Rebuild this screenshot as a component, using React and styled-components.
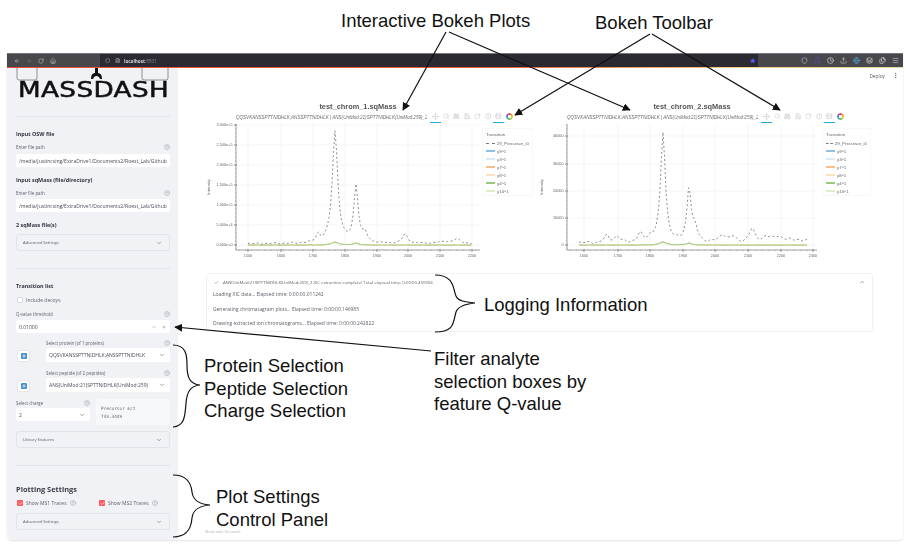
import React from 'react'
import styled, {createGlobalStyle} from 'styled-components'
import {
    ArrowLeft, ArrowRight, RotateCw, House, Shield, FileText, Star, Ghost, Clock, Upload, Globe,
    Layers, Files, Menu, ChevronDown, ChevronUp, CircleHelp, Check, Minus, Plus, EllipsisVertical,
    Move, Search, Binoculars, Save, Rows3, Hash,
} from 'lucide-react'

const GlobalStyle = createGlobalStyle`
html, body {
    margin: 0;
    padding: 0;
    width: 906px;
    height: 546px;
    overflow: hidden;
    background: white;
    font-family: "Open Sans", "Liberation Sans", sans-serif;
}
* {
    box-sizing: border-box;
}
`

const Page = styled.div`
position: relative;
width: 906px;
height: 546px;
padding: 53px 3px 0 7px;
`

const Window = styled.div`
display: flex;
flex-direction: column;
height: 487px;
border-radius: 0 0 5px 5px;
box-shadow: 0 1px 2px rgba(0,0,0,0.12);
overflow: hidden;
filter: blur(0.55px);
`

const BrowserBar = styled.div`
display: flex;
align-items: center;
height: 14px;
flex-shrink: 0;
background-color: #47474c;
border-top: 1px solid #77777b;
color: #c8c8cc;
`

const NavButtons = styled.div`
display: flex;
align-items: center;
gap: 6px;
width: 93px;
padding-left: 7px;
`

const UrlBar = styled.div`
display: flex;
align-items: center;
gap: 4px;
width: 658px;
height: 13px;
padding: 0 3px 0 5px;
background-color: #2b2a33;
`

const UrlText = styled.span`
font-size: 4.6px;
font-weight: 700;
color: #d4d4d8;
span {
    font-weight: 400;
    color: #8a8a90;
}
`

const UrlStar = styled(Star)`
margin-left: auto;
`

const AddonIcons = styled.div`
display: flex;
align-items: center;
gap: 6px;
margin-left: 43px;
`

const AccentLine = styled.div`
height: 1px;
flex-shrink: 0;
background: linear-gradient(90deg, #e8503a 0%, #e8603a 55%, #f2c879 80%, #e8d9a8 100%);
`

const AppBody = styled.div`
display: flex;
flex: 1;
min-height: 0;
background-color: white;
`

const Sidebar = styled.aside`
width: 171px;
flex-shrink: 0;
padding: 0 8px 0 9px;
background-color: #f0f2f6;
color: #31333f;
overflow: hidden;
`

const LogoBlock = styled.div`
height: 48px;
`

const LogoArt = styled.svg`
display: block;
width: 154px;
height: 13px;
`

const LogoText = styled.div`
margin: -1px 0 0 2px;
font-family: "DejaVu Sans", sans-serif;
font-size: 20.5px;
line-height: 20px;
color: #111;
letter-spacing: 0.3px;
white-space: nowrap;
transform: scaleX(1.28);
transform-origin: left center;
-webkit-text-stroke: 0.5px #111;
`

const Divider = styled.div`
height: 1px;
margin-top: ${p => p.$mt ?? 17}px;
background-color: #e1e3e8;
`

const Heading = styled.div`
height: 8px;
margin-top: ${p => p.$mt}px;
font-size: 5.4px;
line-height: 8px;
font-weight: 700;
white-space: nowrap;
`

const BigHeading = styled.div`
height: 10px;
margin-top: 18px;
font-size: 7.4px;
line-height: 10px;
font-weight: 700;
color: #3a3c47;
`

const LabelRow = styled.div`
display: flex;
justify-content: space-between;
align-items: center;
height: 7px;
margin-top: ${p => p.$mt || 0}px;
font-size: 4.4px;
color: #5c5e68;
white-space: nowrap;
`

const HelpIcon = styled(CircleHelp)`
width: 6px;
height: 6px;
color: #9a9ca5;
`

const TextField = styled.div`
display: flex;
align-items: center;
height: 13px;
margin-top: ${p => p.$mt}px;
padding: 0 3px;
border-radius: 2.5px;
background-color: white;
font-size: 5.05px;
color: #4a4c57;
white-space: nowrap;
overflow: hidden;
`

const Expander = styled.div`
display: flex;
align-items: center;
justify-content: space-between;
height: 17px;
margin-top: ${p => p.$mt}px;
padding: 0 7px 0 6px;
border: 1px solid #e2e4e9;
border-radius: 3px;
font-size: 4.2px;
color: #5c5e68;
`

const SmallChevron = styled(ChevronDown)`
width: 6px;
height: 6px;
color: #555;
`

const CheckRow = styled.div`
display: flex;
align-items: center;
gap: 3px;
height: 8px;
margin-top: ${p => p.$mt}px;
font-size: 5px;
color: #5c5e68;
white-space: nowrap;
`

const CheckBox = styled.span`
display: flex;
align-items: center;
justify-content: center;
width: 6px;
height: 6px;
margin-left: 1px;
border-radius: 1px;
border: ${p => p.$on ? 'none' : '1px solid #d5d7de'};
background-color: ${p => p.$on ? '#ff5a5f' : 'white'};
color: white;
`

const CheckPair = styled.div`
display: grid;
grid-template-columns: 82px 1fr;
margin-top: 5px;
`

const NumberField = styled(TextField)`
justify-content: space-between;
padding-right: 4px;
`

const Stepper = styled.div`
display: flex;
gap: 6px;
color: #555;
`

const PickRow = styled.div`
display: flex;
align-items: flex-end;
gap: 16px;
margin-top: ${p => p.$mt}px;
padding-left: 1px;
`

const PickColumn = styled.div`
flex: 1;
min-width: 0;
`

const SquareButton = styled.div`
display: flex;
align-items: center;
justify-content: center;
width: 13px;
height: 12px;
border: 1px solid #e4e6eb;
border-radius: 2px;
background-color: white;
`

const BlueTile = styled.span`
display: flex;
align-items: center;
justify-content: center;
width: 6px;
height: 6px;
border-radius: 1px;
background-color: #4a8fd0;
color: white;
`

const SelectBox = styled.div`
display: flex;
align-items: center;
justify-content: space-between;
height: ${p => p.$h || 14}px;
margin-top: 2px;
padding: 0 5px 0 3px;
border-radius: 2.5px;
background-color: white;
font-size: 5px;
color: #4a4c57;
white-space: nowrap;
`

const ChargeRow = styled.div`
display: grid;
grid-template-columns: 74px 74px;
gap: 6px;
margin-top: 7px;
`

const PrecursorBox = styled.div`
height: 26px;
padding: 6px 5px;
border-radius: 2.5px;
background-color: #f7f8fa;
font-family: "DejaVu Sans Mono", "Liberation Mono", monospace;
font-size: 4.4px;
line-height: 7.5px;
color: #6a6c76;
`

const Content = styled.main`
flex: 1;
min-width: 0;
padding: 4px 4px 0 26px;
color: #444;
`

const TopRow = styled.div`
display: flex;
justify-content: flex-end;
align-items: center;
gap: 7px;
height: 7px;
font-size: 4.8px;
color: #5c5e68;
`

const PlotRow = styled.div`
display: flex;
margin-top: 22px;
`

const ChartBlock = styled.section`
width: ${p => p.$width}px;
flex-shrink: 0;
`

const ChartTitle = styled.h2`
margin: 0 0 0 ${p => p.$gutter}px;
width: ${p => p.$plot}px;
height: 10px;
font-family: "Liberation Sans", sans-serif;
font-size: 7.4px;
line-height: 11px;
font-weight: 700;
text-align: center;
color: #555;
`

const ChartHead = styled.div`
display: flex;
align-items: center;
height: 12px;
margin-left: ${p => p.$gutter}px;
`

const ChartSub = styled.div`
width: ${p => p.$width}px;
font-family: "Liberation Sans", sans-serif;
font-size: 4.55px;
font-style: italic;
color: #6c6c6c;
white-space: nowrap;
overflow: hidden;
`

const ToolStrip = styled.div`
display: flex;
margin-left: 3px;
`

const ToolButton = styled.span`
display: flex;
align-items: center;
justify-content: center;
width: 10.5px;
height: 12px;
color: #b5b5b8;
border-bottom: 1px solid ${p => p.$active ? '#26aae1' : 'transparent'};
`

const BokehWheel = styled.span`
display: block;
width: 7px;
height: 7px;
margin: 2px 0 0 2px;
border-radius: 50%;
background: conic-gradient(#e84a5f, #f6a21e, #f5d020, #5fbf5f, #2fa8e0, #7a5cc8, #e84a5f);
mask: radial-gradient(circle, transparent 1.6px, black 1.9px);
`

const ChartBody = styled.div`
display: flex;
align-items: flex-start;
`

const ChartSvg = styled.svg`
display: block;
flex-shrink: 0;
font-family: "Liberation Sans", sans-serif;
`

const Legend = styled.div`
width: ${p => p.$width}px;
height: 68px;
margin: 5px 0 0 ${p => p.$gap}px;
padding: 2px 3px;
border: 1px solid #f8f8f8;
font-family: "Liberation Sans", sans-serif;
font-size: 4.4px;
color: #666;
`

const LegendTitle = styled.div`
height: 8px;
line-height: 8px;
`

const LegendItem = styled.div`
display: flex;
align-items: center;
gap: 2px;
height: 8px;
white-space: nowrap;
`

const Swatch = styled.span`
display: block;
width: 9px;
height: 0;
border-top: ${p => p.$dashed ? '1px dashed #777' : `2px solid ${p.$color}`};
`

const LogBox = styled.section`
width: 667px;
height: 59px;
margin: 12px 0 0 2px;
padding: 4px 6px;
border: 1px solid #f1f1f3;
border-radius: 3px;
font-size: 4.95px;
color: #5b5d67;
`

const LogHead = styled.div`
display: flex;
align-items: center;
gap: 4px;
height: 8px;
padding-left: 1px;
font-size: 4.3px;
white-space: nowrap;
`

const LogChevron = styled(ChevronUp)`
width: 6px;
height: 6px;
margin-left: auto;
margin-right: 1px;
color: #555;
`

const LogLine = styled.div`
height: 7px;
margin-top: ${p => p.$mt}px;
line-height: 7px;
white-space: nowrap;
`

const Footer = styled.div`
position: absolute;
left: 205px;
top: 529px;
font-size: 3.8px;
color: #b5b7bd;
filter: blur(0.5px);
`

const Annotations = styled.svg`
position: absolute;
left: 0;
top: 0;
width: 906px;
height: 546px;
pointer-events: none;
`

const Note = styled.div`
position: absolute;
left: ${p => p.$x}px;
top: ${p => p.$y}px;
font-family: "Liberation Sans", Arial, sans-serif;
font-size: 18.5px;
line-height: 22.5px;
color: #111;
white-space: nowrap;
`

const wave = (peaks, from, to, base, noise) => {
    const pts = []
    for (let x = from; x <= to; x += 1.5) {
        let y = base
        peaks.forEach(([c, h, w]) => {
            y -= h / (1 + ((x - c) / w) * ((x - c) / w))
        })
        y -= noise * (0.5 + 0.5 * Math.sin(x * 0.53) * Math.sin(x * 0.19))
        pts.push(`${x},${y.toFixed(1)}`)
    }
    return pts.join(' ')
}

const charts = [
    {
        name: 'test_chrom_1.sqMass',
        width: 333,
        gutter: 32,
        plot: 244,
        subWidth: 191,
        legendGap: 2,
        legendWidth: 51,
        yTicks: [['3.000e+5', 124], ['2.500e+5', 144], ['2.000e+5', 164], ['1.500e+5', 184], ['1.000e+5', 204], ['5.000e+4', 224], ['0.000e+0', 244]],
        xTicks: [[1500, 12], [1600, 45], [1700, 77], [1800, 109], [1900, 141], [2000, 172], [2100, 204], [2200, 236]],
        peaks: [[99, 112, 3.2], [120, 57, 2.6], [82, 8, 2], [129, 9, 2.5], [169, 9, 3.2], [221, 4, 4], [209, 2, 8]],
        from: 12,
        to: 236,
        noise: 1.5,
        bump: [[99, 3, 4], [120, 2, 3]],
    },
    {
        name: 'test_chrom_2.sqMass',
        width: 335,
        gutter: 30,
        plot: 250,
        subWidth: 191,
        legendGap: 5,
        legendWidth: 49,
        yTicks: [['40000', 135], ['30000', 163], ['20000', 190], ['10000', 217], ['0', 244]],
        xTicks: [[1600, 17], [1700, 51], [1800, 83], [1900, 116], [2000, 148], [2100, 181], [2200, 214], [2300, 246]],
        peaks: [[96, 110, 2.8], [122, 55, 2.4], [40, 7, 3], [50, 6, 3], [73, 8, 3], [84, 5, 3], [128, 13, 3], [156, 8, 4], [166, 5, 3], [185, 13, 3.5], [199, 5, 4], [211, 6, 6], [230, 3, 10]],
        from: 12,
        to: 240,
        noise: 3,
        bump: [[96, 3, 4], [122, 2, 3]],
    },
]

const legendRows = [
    ['y9^1', '#8fbfe4'],
    ['y3^1', '#dbe8f5'],
    ['y7^1', '#f9bd8a'],
    ['y8^1', '#fde0c2'],
    ['y4^1', '#98cb7c'],
    ['y10^1', '#dbeeca'],
]

const Chart = ({chart}) => {
    const {gutter, plot} = chart
    const minor = []
    for (let y = 124; y <= 249; y += 4) minor.push(y)
    const minorX = []
    for (let x = 3; x <= plot; x += 6.4) minorX.push(x)
    return (
        <ChartBlock $width={chart.width}>
            <ChartTitle $gutter={gutter} $plot={plot}>{chart.name}</ChartTitle>
            <ChartHead $gutter={gutter}>
                <ChartSub $width={chart.subWidth}>QQSVKANSSPTTNIDHLK;ANSSPTTNIDHLK | ANS(UniMod:21)SPTTNIDHLK(UniMod:259)_2</ChartSub>
                <ToolStrip>
                    <ToolButton $active><Move size={7} strokeWidth={1.4} /></ToolButton>
                    <ToolButton><Search size={6.5} strokeWidth={1.4} /></ToolButton>
                    <ToolButton><Binoculars size={6.5} strokeWidth={1.4} /></ToolButton>
                    <ToolButton><Save size={6.5} strokeWidth={1.4} /></ToolButton>
                    <ToolButton><RotateCw size={6.5} strokeWidth={1.4} /></ToolButton>
                    <ToolButton><CircleHelp size={6.5} strokeWidth={1.4} /></ToolButton>
                    <ToolButton $active><Rows3 size={6.5} strokeWidth={1.4} /></ToolButton>
                    <BokehWheel />
                </ToolStrip>
            </ChartHead>
            <ChartBody>
                <ChartSvg width={gutter + plot} height={138} viewBox={`${-gutter} 122 ${gutter + plot} 138`}>
                    {chart.yTicks.map(([label, y]) => (
                        <g key={label}>
                            <line x1="0" x2={plot} y1={y} y2={y} stroke="#f0f0f0" strokeWidth="0.7" />
                            <line x1="-2" x2="1" y1={y} y2={y} stroke="#666" strokeWidth="0.7" />
                            <text x="-3.5" y={y + 1.4} fontSize="3.8" fill="#666" textAnchor="end">{label}</text>
                        </g>
                    ))}
                    {chart.xTicks.map(([label, x]) => (
                        <g key={label}>
                            <line x1={x} x2={x} y1="124" y2="249" stroke="#f0f0f0" strokeWidth="0.7" />
                            <line x1={x} x2={x} y1="248" y2="251" stroke="#666" strokeWidth="0.7" />
                            <text x={x} y="256" fontSize="3.8" fill="#666" textAnchor="middle">{label}</text>
                        </g>
                    ))}
                    {minor.map(y => <line key={y} x1="-1" x2="0" y1={y} y2={y} stroke="#777" strokeWidth="0.5" />)}
                    {minorX.map(x => <line key={x} x1={x} x2={x} y1="249" y2="250" stroke="#777" strokeWidth="0.5" />)}
                    <line x1="0" x2="0" y1="123" y2="249" stroke="#777" strokeWidth="0.7" />
                    <line x1="0" x2={plot} y1="249" y2="249" stroke="#777" strokeWidth="0.7" />
                    <text fontSize="4.2" fill="#666" textAnchor="middle" transform={`translate(${-gutter + 6} 186) rotate(-90)`}>Intensity</text>
                    <polyline points={wave(chart.bump, chart.from, chart.to, 244, 0)} fill="none" stroke="#fbc79a" strokeWidth="1" />
                    <polyline points={wave(chart.bump, chart.from, chart.to, 244.2, 0.2)} fill="none" stroke="#a9d28f" strokeWidth="1.2" />
                    <polyline points={wave(chart.peaks, chart.from, chart.to, 243.5, chart.noise)} fill="none" stroke="#8c8c8c" strokeWidth="1" strokeDasharray="2 2.4" />
                </ChartSvg>
                <Legend $gap={chart.legendGap} $width={chart.legendWidth}>
                    <LegendTitle>Transition</LegendTitle>
                    <LegendItem><Swatch $dashed />29_Precursor_i0</LegendItem>
                    {legendRows.map(([label, color]) => (
                        <LegendItem key={label}><Swatch $color={color} />{label}</LegendItem>
                    ))}
                </Legend>
            </ChartBody>
        </ChartBlock>
    )
}

const Arrow = ({d}) => (
    <path d={d} fill="none" stroke="#111" strokeWidth="1.2" markerEnd="url(#head)" />
)

const FILE_PATH = '/media/justincsing/ExtraDrive1/Documents2/Roest_Lab/Github'

const App = () => {
    return (
        <Page>
            <GlobalStyle />
            <Window>
                <BrowserBar>
                    <NavButtons>
                        <ArrowLeft size={6} />
                        <ArrowRight size={6} color="#77777b" />
                        <RotateCw size={6} />
                        <House size={6} />
                    </NavButtons>
                    <UrlBar>
                        <Shield size={5.5} />
                        <FileText size={5.5} />
                        <UrlText>localhost<span>:8501</span></UrlText>
                        <UrlStar size={5.5} fill="#5b5bf0" color="#5b5bf0" />
                    </UrlBar>
                    <AddonIcons>
                        <Shield size={7} />
                        <Ghost size={7} color="#5a4fc0" />
                        <Clock size={7} color="#eee" />
                        <Upload size={7} />
                        <Globe size={7} color="#5aa9e0" />
                        <Layers size={7} color="#eee" />
                        <Files size={7} color="#eee" />
                        <Menu size={7} />
                    </AddonIcons>
                </BrowserBar>
                <AccentLine />
                <AppBody>
                    <Sidebar>
                        <LogoBlock>
                            <LogoArt viewBox="0 0 154 13">
                                <path d="M1 0 V10 Q1 12 3 12 H19 Q21 12 21 10 V0" fill="none" stroke="#777" strokeWidth="0.8" />
                                <path d="M126 0 V10 Q126 12 128 12 H150 Q152 12 152 10 V0" fill="none" stroke="#777" strokeWidth="0.8" />
                                <path d="M75 11 Q75 5 79 5 V0 H82 V5 Q86 5 86 11 H84 Q83 8 80.5 8 Q78 8 77 11 Z" fill="#111" />
                            </LogoArt>
                            <LogoText>MASSDASH</LogoText>
                        </LogoBlock>
                        <Divider $mt={0} />
                        <Heading $mt={13}>Input OSW file</Heading>
                        <LabelRow $mt={5}>Enter file path<HelpIcon /></LabelRow>
                        <TextField $mt={4}>{FILE_PATH}</TextField>
                        <Heading $mt={9}>Input sqMass (file/directory)</Heading>
                        <LabelRow $mt={5}>Enter file path<HelpIcon /></LabelRow>
                        <TextField $mt={3}>{FILE_PATH}</TextField>
                        <Heading $mt={9}>2 sqMass file(s)</Heading>
                        <Expander $mt={5}>Advanced Settings<SmallChevron /></Expander>
                        <Divider />
                        <Heading $mt={13}>Transition list</Heading>
                        <CheckRow $mt={6}><CheckBox />Include decoys</CheckRow>
                        <LabelRow $mt={6}>Q-value threshold<HelpIcon /></LabelRow>
                        <NumberField $mt={3}>
                            0.01000
                            <Stepper><Minus size={4} /><Plus size={4} /></Stepper>
                        </NumberField>
                        <PickRow $mt={6}>
                            <SquareButton><BlueTile><Hash size={4} /></BlueTile></SquareButton>
                            <PickColumn>
                                <LabelRow>Select protein (of 1 proteins)<HelpIcon /></LabelRow>
                                <SelectBox>QQSVKANSSPTTNIDHLK;ANSSPTTNIDHLK<SmallChevron /></SelectBox>
                            </PickColumn>
                        </PickRow>
                        <PickRow $mt={7}>
                            <SquareButton><BlueTile><Hash size={4} /></BlueTile></SquareButton>
                            <PickColumn>
                                <LabelRow>Select peptide (of 2 peptides)<HelpIcon /></LabelRow>
                                <SelectBox>ANS(UniMod:21)SPTTNIDHLK(UniMod:259)<SmallChevron /></SelectBox>
                            </PickColumn>
                        </PickRow>
                        <ChargeRow>
                            <div>
                                <LabelRow>Select charge<HelpIcon /></LabelRow>
                                <SelectBox $h={13}>2<SmallChevron /></SelectBox>
                            </div>
                            <PrecursorBox>Precursor m/z<br />743.3449</PrecursorBox>
                        </ChargeRow>
                        <Expander $mt={6}>Library features<SmallChevron /></Expander>
                        <Divider />
                        <BigHeading>Plotting Settings</BigHeading>
                        <CheckPair>
                            <CheckRow $mt={0}><CheckBox $on><Check size={5} strokeWidth={3} /></CheckBox>Show MS1 Traces<HelpIcon /></CheckRow>
                            <CheckRow $mt={0}><CheckBox $on><Check size={5} strokeWidth={3} /></CheckBox>Show MS2 Traces<HelpIcon /></CheckRow>
                        </CheckPair>
                        <Expander $mt={6}>Advanced Settings<SmallChevron /></Expander>
                    </Sidebar>
                    <Content>
                        <TopRow>Deploy<EllipsisVertical size={7} /></TopRow>
                        <PlotRow>
                            {charts.map(chart => <Chart key={chart.name} chart={chart} />)}
                        </PlotRow>
                        <LogBox>
                            <LogHead>
                                <Check size={5} />
                                ANS(UniMod:21)SPTTNIDHLK(UniMod:259)_2 XIC extraction complete! Total elapsed time: 0:00:00.450004
                                <LogChevron />
                            </LogHead>
                            <LogLine $mt={5}>Loading XIC data... Elapsed time: 0:00:00.011242</LogLine>
                            <LogLine $mt={7.5}>Generating chromatagram plots... Elapsed time: 0:00:00.146985</LogLine>
                            <LogLine $mt={7.5}>Drawing extracted ion chromatograms... Elapsed time: 0:00:00.242822</LogLine>
                        </LogBox>
                    </Content>
                </AppBody>
            </Window>
            <Footer>Made with Streamlit</Footer>

            <Annotations viewBox="0 0 906 546">
                <defs>
                    <marker id="head" viewBox="0 0 10 10" refX="9" refY="5" markerWidth="8" markerHeight="8" orient="auto-start-reverse" markerUnits="userSpaceOnUse">
                        <path d="M0 0 L10 5 L0 10 Z" fill="#111" />
                    </marker>
                </defs>
                <Arrow d="M446 32 L403 110" />
                <Arrow d="M449 32 L630 110" />
                <Arrow d="M650 34 L515 115" />
                <Arrow d="M652 34 L780 110" />
                <Arrow d="M431 351 L175 327" />
                <g fill="none" stroke="#111" strokeWidth="1.2">
                    <path d="M435 275 C455 275 453 290 456 296 C458 301 465 302 475 303 C465 304 458 306 456 312 C453 322 455 332 435 332" />
                    <path d="M173 345 C186 345 187 355 187 365 C187 378 190 384 200 385 C190 386 187 392 186 403 C185 418 184 426 173 427" />
                    <path d="M173 475 C186 475 191 482 192 492 C193 500 198 504 210 505 C198 506 193 510 192 518 C191 530 186 537 173 537" />
                </g>
            </Annotations>
            <Note $x={341} $y={10}>Interactive Bokeh Plots</Note>
            <Note $x={595} $y={12}>Bokeh Toolbar</Note>
            <Note $x={484} $y={294}>Logging Information</Note>
            <Note $x={204} $y={355}>Protein Selection<br />Peptide Selection<br />Charge Selection</Note>
            <Note $x={434} $y={348}>Filter analyte<br />selection boxes by<br />feature Q-value</Note>
            <Note $x={216} $y={486}>Plot Settings<br />Control Panel</Note>
        </Page>
    )
}

export default App
